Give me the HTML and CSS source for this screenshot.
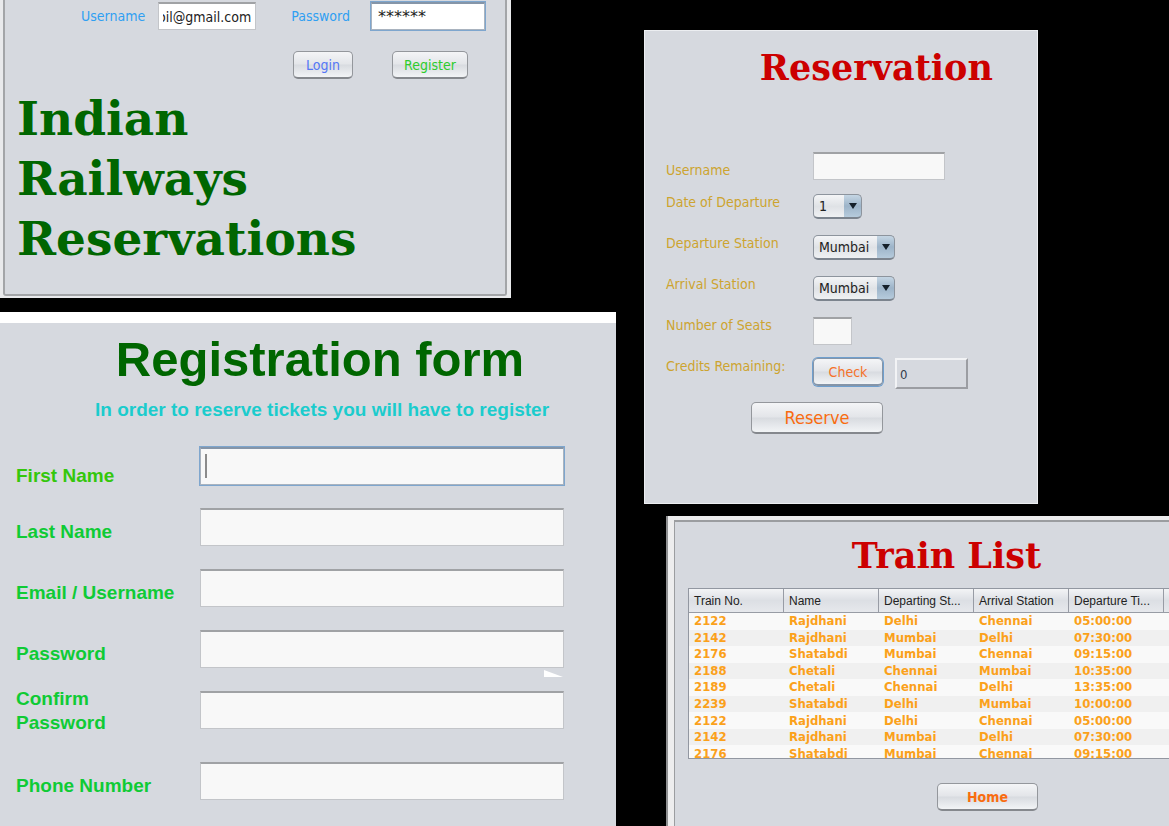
FILE: index.html
```html
<!DOCTYPE html>
<html lang="en">
<head>
<meta charset="utf-8">
<title>Indian Railways Reservations</title>
<link rel="stylesheet" href="styles.css">
</head>
<body>
<main class="board">
  <div class="column">
    <section class="window login">
      <form class="login-frame">
        <div class="login-fields">
          <label for="login-user">Username</label>
          <input class="field user-field" id="login-user" type="text" value="oil@gmail.com">
          <label for="login-pass">Password</label>
          <input class="field focused pass-field" id="login-pass" type="text" value="******">
        </div>
        <div class="login-actions">
          <button class="button login-button" type="button">Login</button>
          <button class="button register-button" type="button">Register</button>
        </div>
        <h1 class="brand">Indian<br>Railways<br>Reservations</h1>
      </form>
    </section>

    <section class="window registration">
      <h2 class="registration-title">Registration form</h2>
      <p class="registration-note">In order to reserve tickets you will have to register</p>
      <form class="registration-form">
        <div class="entry entry-first">
          <label for="first">First Name</label>
          <div class="caret-box"><input class="field focused" id="first" type="text"><span class="caret"></span></div>
        </div>
        <div class="entry"><label for="last">Last Name</label><input class="field" id="last" type="text"></div>
        <div class="entry"><label for="email">Email / Username</label><input class="field" id="email" type="text"></div>
        <div class="entry">
          <label for="pass">Password</label><input class="field" id="pass" type="password">
          <svg class="notch" width="19" height="7" viewBox="0 0 19 7" aria-hidden="true"><path d="M0 0L19 7H0Z" fill="#fff"/></svg>
        </div>
        <div class="entry entry-confirm"><label for="confirm">Confirm<br>Password</label><input class="field" id="confirm" type="password"></div>
        <div class="entry"><label for="phone">Phone Number</label><input class="field" id="phone" type="text"></div>
      </form>
    </section>
  </div>

  <div class="column">
    <section class="window reservation">
      <h2 class="red-title">Reservation</h2>
      <form class="reservation-form">
        <div class="line line-user"><label for="res-user">Username</label><input class="field" id="res-user" type="text"></div>
        <div class="line">
          <label for="date">Date of Departure</label>
          <span class="picker picker-day"><select id="date"><option>1</option><option>2</option></select><svg width="8" height="6" viewBox="0 0 8 6" aria-hidden="true"><path d="M0 0H8L4 6Z" fill="#15202a"/></svg></span>
        </div>
        <div class="line">
          <label for="from">Departure Station</label>
          <span class="picker"><select id="from"><option>Mumbai</option><option>Delhi</option><option>Chennai</option></select><svg width="8" height="6" viewBox="0 0 8 6" aria-hidden="true"><path d="M0 0H8L4 6Z" fill="#15202a"/></svg></span>
        </div>
        <div class="line">
          <label for="to">Arrival Station</label>
          <span class="picker"><select id="to"><option>Mumbai</option><option>Delhi</option><option>Chennai</option></select><svg width="8" height="6" viewBox="0 0 8 6" aria-hidden="true"><path d="M0 0H8L4 6Z" fill="#15202a"/></svg></span>
        </div>
        <div class="line"><label for="seats">Number of Seats</label><input class="field seats" id="seats" type="text"></div>
        <div class="line">
          <label for="credits">Credits Remaining:</label>
          <div class="credits"><button class="button check" type="button">Check</button><output class="credit-value" id="credits">0</output></div>
        </div>
        <button class="button reserve" type="button">Reserve</button>
      </form>
    </section>

    <section class="window trains">
      <div class="trains-frame">
        <h2 class="red-title">Train List</h2>
        <div class="table-view">
          <table>
            <thead><tr><th>Train No.</th><th>Name</th><th>Departing St...</th><th>Arrival Station</th><th>Departure Ti...</th><th></th></tr></thead>
            <tbody>
              <tr><td>2122</td><td>Rajdhani</td><td>Delhi</td><td>Chennai</td><td>05:00:00</td><td></td></tr>
              <tr><td>2142</td><td>Rajdhani</td><td>Mumbai</td><td>Delhi</td><td>07:30:00</td><td></td></tr>
              <tr><td>2176</td><td>Shatabdi</td><td>Mumbai</td><td>Chennai</td><td>09:15:00</td><td></td></tr>
              <tr><td>2188</td><td>Chetali</td><td>Chennai</td><td>Mumbai</td><td>10:35:00</td><td></td></tr>
              <tr><td>2189</td><td>Chetali</td><td>Chennai</td><td>Delhi</td><td>13:35:00</td><td></td></tr>
              <tr><td>2239</td><td>Shatabdi</td><td>Delhi</td><td>Mumbai</td><td>10:00:00</td><td></td></tr>
              <tr><td>2122</td><td>Rajdhani</td><td>Delhi</td><td>Chennai</td><td>05:00:00</td><td></td></tr>
              <tr><td>2142</td><td>Rajdhani</td><td>Mumbai</td><td>Delhi</td><td>07:30:00</td><td></td></tr>
              <tr><td>2176</td><td>Shatabdi</td><td>Mumbai</td><td>Chennai</td><td>09:15:00</td><td></td></tr>
            </tbody>
          </table>
        </div>
        <button class="button home" type="button">Home</button>
      </div>
    </section>
  </div>
</main>
</body>
</html>
```
FILE: styles.css
```css
* { box-sizing: border-box; }
html, body { margin: 0; background: #000; overflow: hidden; }
body, input, button, select { font-family: "DejaVu Sans Condensed", "DejaVu Sans", sans-serif; font-size: 14px; }
h1, h2, p { margin: 0; }

.board {
  display: grid;
  grid-template-columns: minmax(0, 616fr) minmax(0, 525fr);
  column-gap: 28px;
  height: 100vh;
}
.column { display: flex; flex-direction: column; min-width: 0; }
.window { background: #d6d9df; }

/* Shared controls */
.field {
  height: 28px;
  padding: 0 6px;
  border: 1px solid #c3c5c9;
  border-top: 2px solid #a0a2a5;
  border-radius: 0;
  background: #f8f8f8;
  outline: none;
  color: #222;
}
.focused {
  border: 1px solid #a9b3bf;
  border-top: 2px solid #8595a8;
  box-shadow: 0 0 0 1px #7ea6ce;
}
.button {
  height: 28px;
  padding: 0;
  border: 1px solid #94979c;
  border-bottom: 2px solid #85888d;
  border-radius: 5px;
  background: linear-gradient(#f4f5f7, #e3e5e9 48%, #d8dbe0 52%, #f2f4f6);
}

/* Login */
.login {
  width: 83%;
  padding: 0 4px 2px 3px;
  background: #e9eaec;
}
.login-frame {
  height: 296px;
  padding: 2px 18px 0 12px;
  border: 2px solid #a3a5a8;
  border-top: 0;
  border-radius: 0 0 3px 3px;
  background: #d6d9df;
}
.login-fields { display: flex; align-items: center; padding-left: 64px; color: #2f9ff2; }
.login-fields .field { background: #fff; }
.user-field { width: 98px; margin: 0 35px 0 13px; padding: 0 4px; direction: rtl; }
.pass-field { width: 114px; margin-left: 21px; font-family: "DejaVu Sans", sans-serif; font-size: 16px; }
.login-actions { display: flex; gap: 39px; padding: 21px 0 0 276px; }
.login-button { width: 60px; color: #5577f5; }
.register-button { width: 76px; color: #2dcc2d; }
.brand {
  padding-top: 10px;
  font-family: "DejaVu Serif", serif;
  font-size: 47px;
  line-height: 60px;
  color: #006600;
}

/* Registration */
.registration {
  flex: 1;
  margin-top: 14px;
  padding: 8px 16px 0;
  border-top: 11px solid #fff;
  font-family: "Liberation Sans", Arial, sans-serif;
  font-weight: bold;
}
.registration-title { padding-left: 24px; font-size: 49px; line-height: 56px; text-align: center; color: #006600; }
.registration-note { padding: 11px 0 21px 28px; font-size: 19px; line-height: 24px; text-align: center; color: #1bcccd; }
.entry {
  display: grid;
  grid-template-columns: 184px minmax(0, 1fr);
  align-items: start;
  position: relative;
  min-height: 61px;
  padding-right: 36px;
  font-size: 19px;
  line-height: 24px;
  color: #0fcb35;
}
.entry label { padding-top: 16px; }
.entry .field { width: 100%; height: 38px; margin-top: 4px; }
.entry-first { color: #34c70c; }
.entry-first label { padding-top: 21px; }
.entry-confirm { min-height: 71px; }
.entry-confirm label { padding-top: 0; }
.caret-box { position: relative; display: flex; }
.caret { position: absolute; left: 5px; top: 11px; width: 2px; height: 24px; background: #8b8b8b; }
.notch { position: absolute; right: 37px; top: 44px; }

/* Reservation */
.reservation {
  width: 75%;
  height: 474px;
  margin-top: 30px;
  padding: 13px 22px 0 21px;
  border: 1px solid #eceef1;
}
.red-title { font-family: "DejaVu Serif", serif; font-size: 35px; line-height: 48px; color: #cc0000; text-align: center; }
.reservation .red-title { padding-left: 72px; }
.reservation-form { padding-top: 60px; color: #cda42f; }
.line { display: grid; grid-template-columns: 147px minmax(0, 1fr); align-items: start; height: 41px; line-height: 16px; }
.line-user { height: 42px; }
.line-user label { padding-top: 10px; }
.line-user .field { width: 132px; }
.seats { width: 39px; }
.picker { position: relative; justify-self: start; display: flex; }
.picker select {
  appearance: none;
  width: 82px;
  height: 25px;
  padding: 0 20px 0 5px;
  border: 1px solid #8d949d;
  border-bottom: 2px solid #7c848e;
  border-radius: 5px;
  background: linear-gradient(#c5d6e4, #9db4c9 50%, #b6cbdc) right / 17px 100% no-repeat, linear-gradient(#f4f5f7, #dfe2e6 52%, #eff1f3);
  color: #222;
}
.picker-day select { width: 49px; }
.picker svg { position: absolute; right: 5px; top: 9px; pointer-events: none; }
.credits { display: flex; gap: 12px; }
.check { width: 70px; border-color: #8595a8; box-shadow: 0 0 0 1px #6f9fce; color: #f5722a; }
.credit-value {
  width: 73px;
  height: 31px;
  padding: 7px 3px;
  border: 2px solid;
  border-color: #f2f3f5 #9b9da2 #9b9da2 #f2f3f5;
  font-size: 13px;
  color: #333c4c;
}
.reserve { width: 132px; height: 32px; margin: 3px 0 0 85px; font-size: 18px; color: #f96c10; }

/* Train list */
.trains { flex: 1; margin: 12px 0 0 22px; padding: 4px 0 0 6px; border-left: 2px solid #8f9092; background: #ededee; }
.trains-frame {
  display: flex;
  flex-direction: column;
  height: 100%;
  padding: 10px 0 0 13px;
  border: solid #9b9da0;
  border-width: 2px 0 0 1px;
  background: #d6d9df;
}
.trains .red-title { padding-left: 36px; }
.table-view { height: 171px; margin-top: 8px; overflow: hidden; border: 1px solid #9297a1; border-right: 0; background: #fff; }
table { width: 570px; height: 173px; table-layout: fixed; border-collapse: separate; border-spacing: 0; }
th, td { padding: 0 5px; text-align: left; overflow: hidden; white-space: nowrap; }
th {
  height: 24px;
  border-right: 1px solid #989ca5;
  border-bottom: 1px solid #989ca5;
  background: linear-gradient(#f3f4f6, #dcdfe4 50%, #e6e8ec);
  font-family: "Liberation Sans", Arial, sans-serif;
  font-size: 12px;
  font-weight: normal;
  color: #222;
}
td { font-size: 13px; line-height: 16px; font-weight: bold; color: #fba11b; background: #f9f9f9; }
tr:nth-child(even) td { background: #f0f0f0; }
.home { align-self: center; width: 101px; margin: 24px 0 0 118px; font-weight: bold; color: #f96c10; }
```
